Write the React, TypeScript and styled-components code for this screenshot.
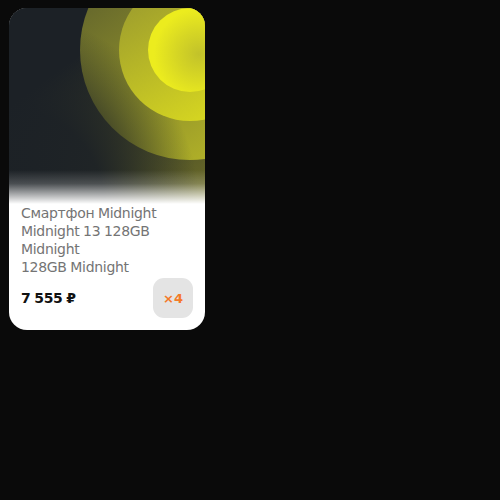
import React from "react";
import styled, { createGlobalStyle } from "styled-components";

const Global = createGlobalStyle`
  html, body { margin: 0; padding: 0; background: #0a0a0a; }
  body { font-family: "DejaVu Sans", sans-serif; }
`;

const Page = styled.div`
  width: 500px;
  height: 500px;
  padding: 8px 0 0 9px;
  box-sizing: border-box;
  background: #0a0a0a;
`;

const Card = styled.div`
  width: 196px;
  background: #ffffff;
  border-radius: 18px;
  overflow: hidden;
  display: flex;
  flex-direction: column;
`;

const Media = styled.div`
  width: 196px;
  height: 196px;
  background: #1c2126;
`;

const Art = styled.svg`
  display: block;
  width: 100%;
  height: 100%;
`;

const Body = styled.div`
  padding: 0 12px 12px;
  display: flex;
  flex-direction: column;
`;

const Title = styled.div`
  font-family: "DejaVu Sans", sans-serif;
  font-size: 14px;
  line-height: 18px;
  letter-spacing: -0.3px;
  word-spacing: -0.5px;
  color: #747474;
`;

const Footer = styled.div`
  margin-top: 2px;
  display: flex;
  align-items: center;
  justify-content: space-between;
`;

const Price = styled.div`
  font-family: "DejaVu Sans", sans-serif;
  font-weight: 700;
  font-size: 14px;
  color: #111111;
  letter-spacing: -0.4px;
  word-spacing: -0.5px;
`;

const Badge = styled.div`
  width: 40px;
  height: 40px;
  border-radius: 11px;
  background: #e4e4e4;
  display: flex;
  align-items: center;
  justify-content: center;
  font-family: "DejaVu Sans", sans-serif;
  font-weight: 700;
  font-size: 13px;
  color: #f47a28;
`;

export default function App() {
  return (
    <>
      <Global />
      <Page>
        <Card>
          <Media>
            <Art viewBox="0 0 196 196" preserveAspectRatio="none">
              <defs>
                <linearGradient id="bg" x1="80" y1="40" x2="196" y2="196" gradientUnits="userSpaceOnUse">
                  <stop offset="0" stopColor="#1c2126" />
                  <stop offset="1" stopColor="#6e6e28" />
                </linearGradient>
                <linearGradient id="outer" x1="80" y1="0" x2="196" y2="160" gradientUnits="userSpaceOnUse">
                  <stop offset="0" stopColor="#686a2c" />
                  <stop offset="1" stopColor="#b2b228" />
                </linearGradient>
                <linearGradient id="mid" x1="130" y1="0" x2="196" y2="120" gradientUnits="userSpaceOnUse">
                  <stop offset="0" stopColor="#a2a22c" />
                  <stop offset="1" stopColor="#d8d820" />
                </linearGradient>
                <radialGradient id="shade" cx="0" cy="196" r="190" gradientUnits="userSpaceOnUse">
                  <stop offset="0" stopColor="#1c2126" stopOpacity="1" />
                  <stop offset="0.5" stopColor="#1c2126" stopOpacity="0.92" />
                  <stop offset="0.75" stopColor="#1c2126" stopOpacity="0.45" />
                  <stop offset="1" stopColor="#1c2126" stopOpacity="0" />
                </radialGradient>
                <radialGradient id="inner" cx="190" cy="46" r="45" gradientUnits="userSpaceOnUse">
                  <stop offset="0" stopColor="#c2c22a" />
                  <stop offset="0.5" stopColor="#d6d624" />
                  <stop offset="1" stopColor="#ecec1e" />
                </radialGradient>
                <linearGradient id="fade" x1="0" y1="0" x2="0" y2="1">
                  <stop offset="0" stopColor="#ffffff" stopOpacity="0" />
                  <stop offset="0.4" stopColor="#ffffff" stopOpacity="0.2" />
                  <stop offset="1" stopColor="#ffffff" stopOpacity="1" />
                </linearGradient>
              </defs>
              <rect x="0" y="0" width="196" height="196" fill="url(#bg)" />
              <circle cx="181" cy="42" r="110" fill="url(#outer)" />
              <rect x="0" y="0" width="196" height="196" fill="url(#shade)" />
              <circle cx="181" cy="42" r="71" fill="url(#mid)" />
              <circle cx="181" cy="42" r="42" fill="url(#inner)" />
              <rect x="0" y="162" width="196" height="34" fill="url(#fade)" />
            </Art>
          </Media>
          <Body>
            <Title>Смартфон Midnight Midnight 13 128GB Midnight</Title>
            <Title>128GB Midnight</Title>
            <Footer>
              <Price>7 555 ₽</Price>
              <Badge>×4</Badge>
            </Footer>
          </Body>
        </Card>
      </Page>
    </>
  );
}
